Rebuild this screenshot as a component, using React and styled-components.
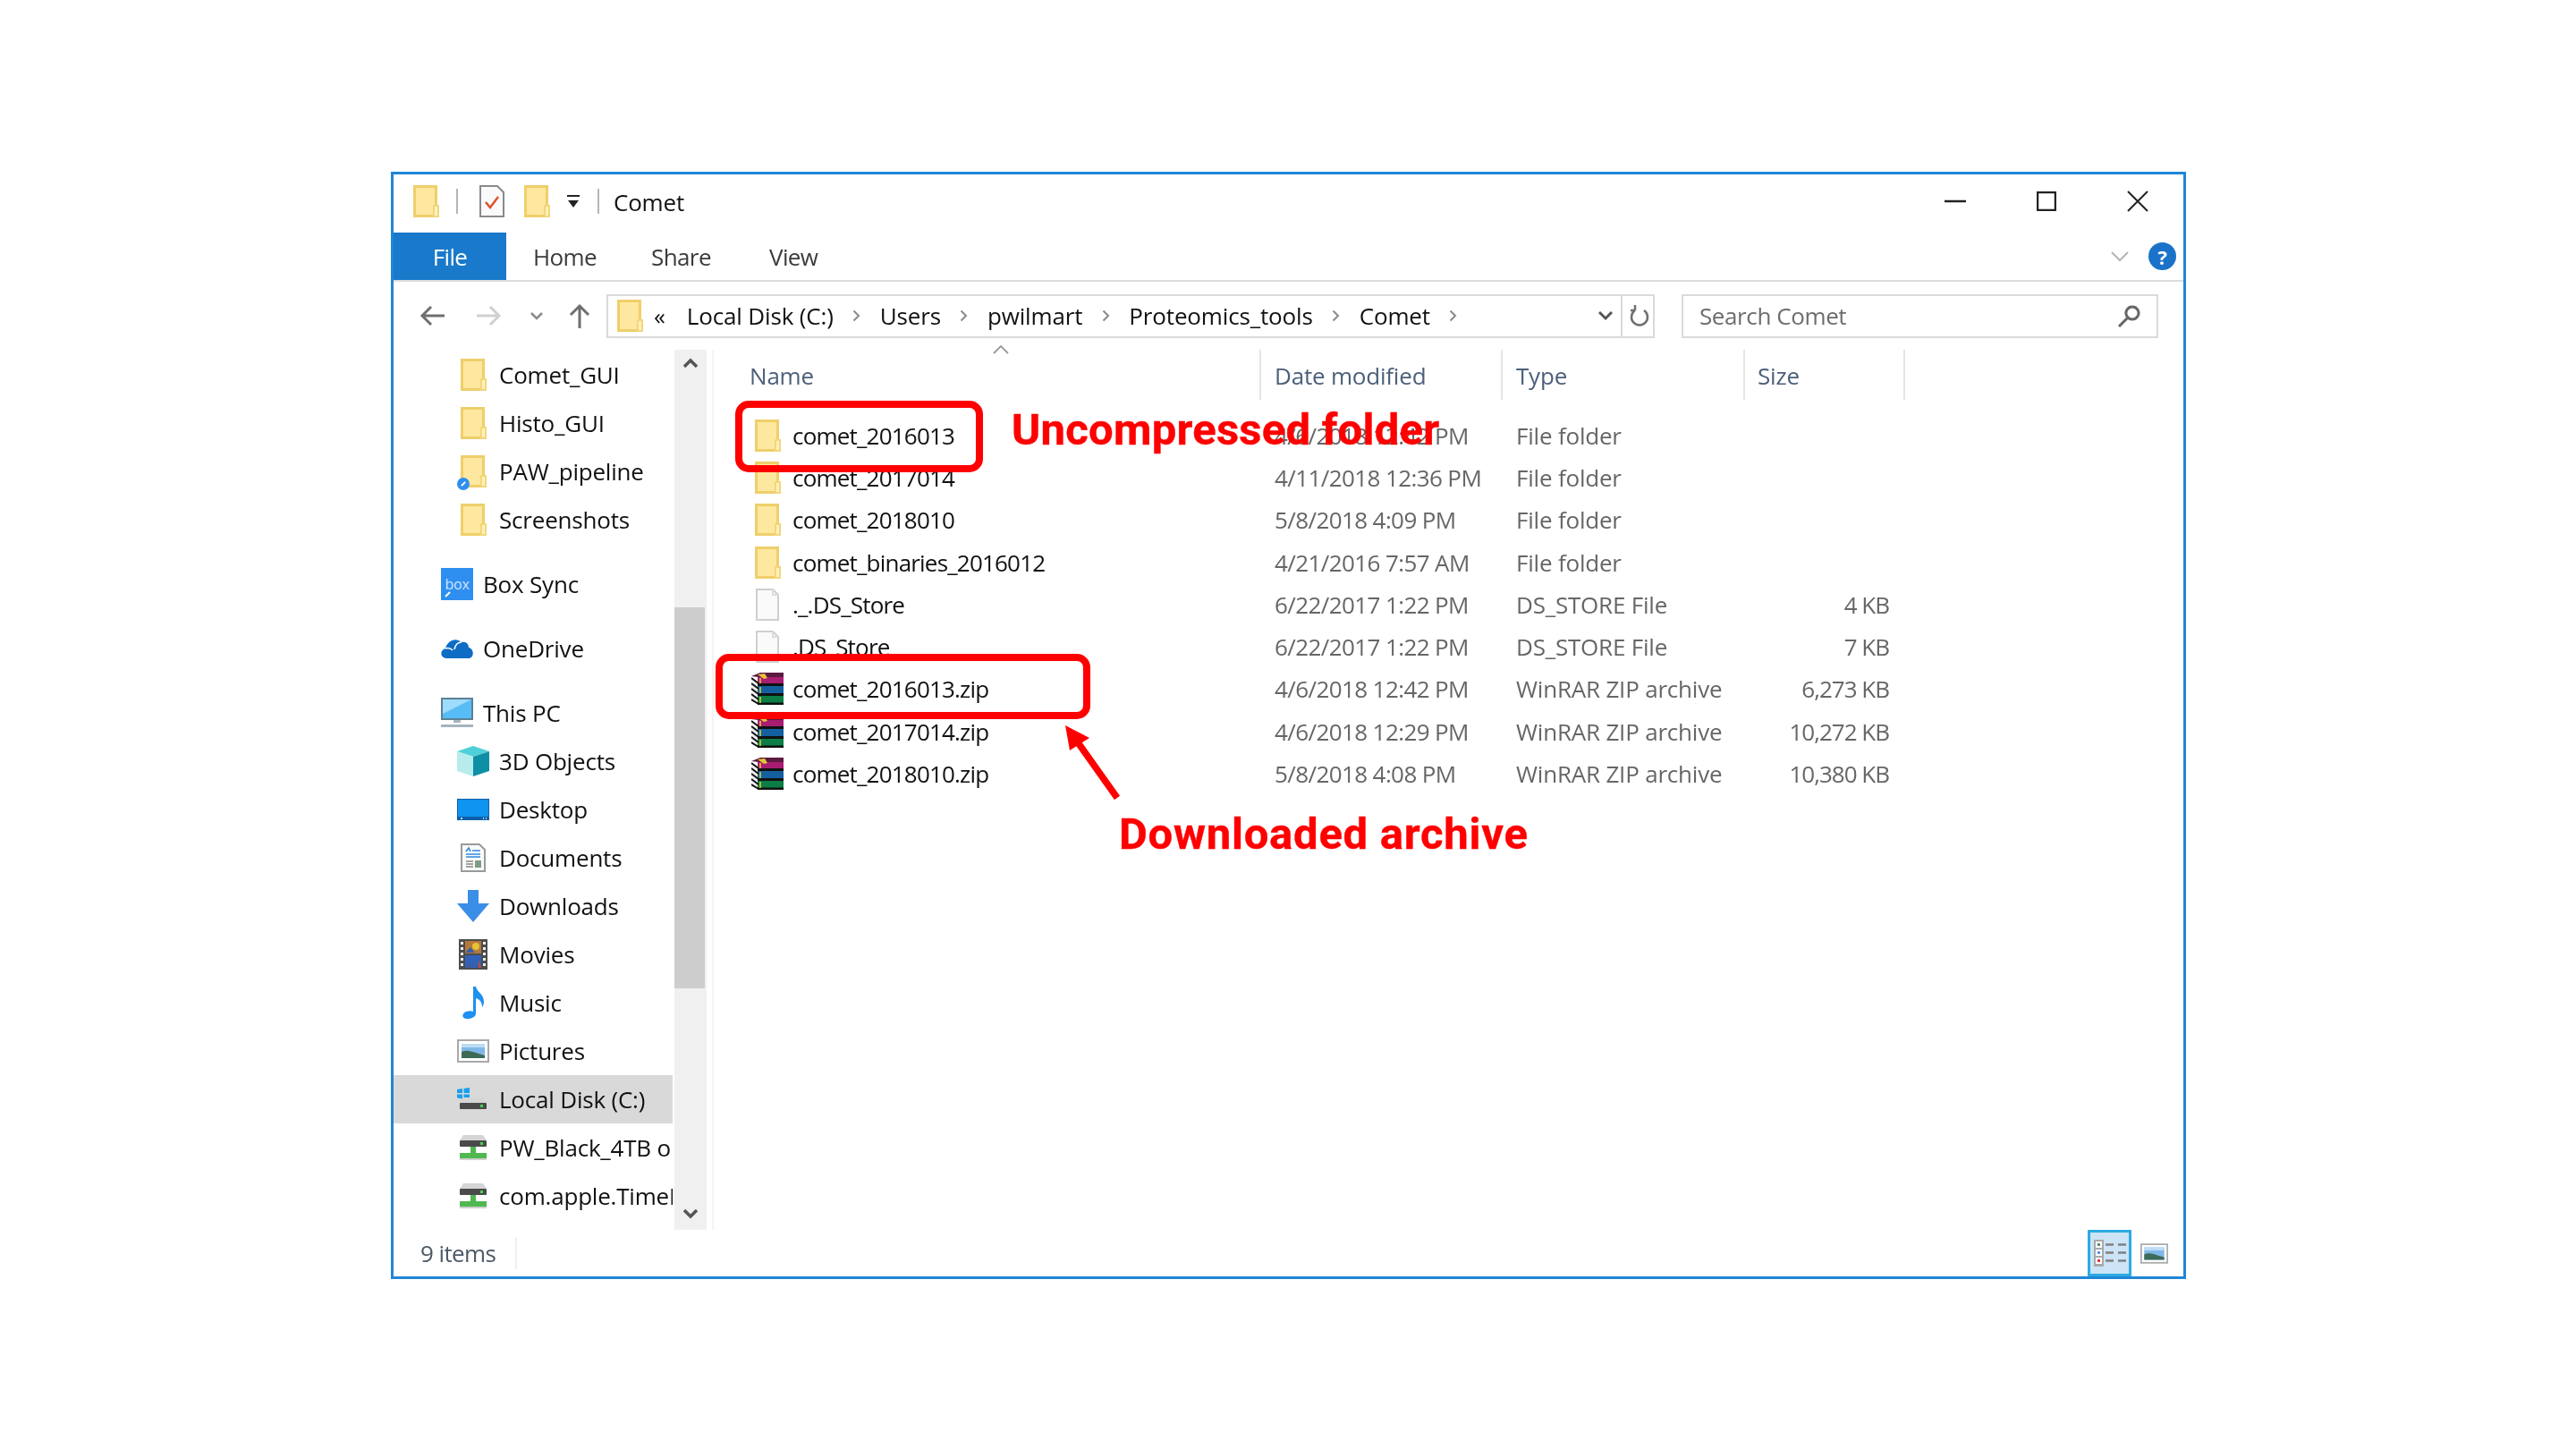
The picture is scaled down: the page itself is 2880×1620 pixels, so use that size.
import React from 'react';
import styled, { createGlobalStyle } from 'styled-components';

const Global = createGlobalStyle`
  html, body { margin: 0; padding: 0; background: #fff; }
  body { font-family: "Open Sans", "Noto Sans", sans-serif; }
`;

const Page = styled.div`
  width: 2880px;
  height: 1620px;
  box-sizing: border-box;
  padding: 192px 0 0 437px;
  overflow: hidden;
`;

const Stage = styled.div`
  position: relative;
  width: 2007px;
  height: 1238px;
`;

const Window = styled.div`
  width: 100%;
  height: 100%;
  box-sizing: border-box;
  border: 3px solid #1f86d8;
  display: flex;
  flex-direction: column;
  font-size: 26px;
  letter-spacing: -0.6px;
  color: #111;
  filter: blur(0.6px);
`;

const TitleBar = styled.div`
  height: 65px;
  box-sizing: border-box;
  padding-bottom: 5px;
  display: flex;
  align-items: center;
  flex: none;
`;

const Quick = styled.span`
  display: flex;
  align-items: center;
  margin-left: ${p => p.$left}px;
`;

const QuickSep = styled.span`
  width: 2px;
  height: 28px;
  background: #b5b5b5;
  margin-left: ${p => p.$left}px;
`;

const WindowTitle = styled.span`
  margin-left: 16px;
  padding-top: 2px;
  letter-spacing: -0.2px;
`;

const WinControls = styled.div`
  margin-left: auto;
  display: flex;
`;

const WinButton = styled.span`
  width: 102px;
  display: flex;
  justify-content: center;
  align-items: center;
`;

const RibbonTabs = styled.div`
  height: 53px;
  flex: none;
  display: flex;
  align-items: stretch;
  border-bottom: 2px solid #dcdcdc;
`;

const FileTab = styled.div`
  width: 126px;
  background: #1979ca;
  color: #fff;
  display: flex;
  align-items: center;
  justify-content: center;
`;

const TabGroup = styled.div`
  display: flex;
  padding-left: 30px;
`;

const Tab = styled.div`
  width: 132px;
  display: flex;
  align-items: center;
  color: #3b3b3b;
`;

const RibbonEnd = styled.div`
  margin-left: auto;
  display: flex;
  align-items: center;
  gap: 22px;
  padding-right: 8px;
`;

const HelpBadge = styled.span`
  width: 31px;
  height: 31px;
  border-radius: 50%;
  background: #1a73c9;
  color: #fff;
  font-weight: 700;
  font-size: 22px;
  display: flex;
  align-items: center;
  justify-content: center;
`;

const AddressRow = styled.div`
  height: 76px;
  flex: none;
  display: flex;
  align-items: center;
`;

const NavSlot = styled.span`
  width: ${p => p.$w}px;
  display: flex;
  justify-content: center;
  align-items: center;
`;

const AddressBar = styled.div`
  margin-left: 14px;
  width: 1172px;
  height: 49px;
  box-sizing: border-box;
  border: 2px solid #dadada;
  display: flex;
  align-items: center;
  padding-left: 10px;
  letter-spacing: -0.15px;
`;

const Crumb = styled.span`
  margin-left: ${p => p.$left || 0}px;
`;

const CrumbSep = styled.span`
  display: flex;
  margin: 0 21.5px;
`;

const AddressEnd = styled.div`
  margin-left: auto;
  height: 100%;
  display: flex;
  align-items: center;
`;

const RefreshSlot = styled.span`
  width: 36px;
  height: 100%;
  box-sizing: border-box;
  padding-left: 4px;
  border-left: 2px solid #dadada;
  margin-left: 9px;
  display: flex;
  justify-content: center;
  align-items: center;
`;

const SearchBox = styled.div`
  margin-left: 30px;
  width: 533px;
  height: 49px;
  box-sizing: border-box;
  border: 2px solid #dadada;
  display: flex;
  align-items: center;
  justify-content: space-between;
  padding: 0 18px;
  color: #6d6d6d;
  letter-spacing: -0.4px;
`;

const Main = styled.div`
  flex: 1;
  min-height: 0;
  display: flex;
`;

const Tree = styled.div`
  width: 312px;
  flex: none;
  padding-top: 1px;
  overflow: hidden;
  letter-spacing: -0.2px;
`;

const TreeRow = styled.div`
  height: 54px;
  display: flex;
  align-items: center;
  gap: 11px;
  white-space: nowrap;
  padding-left: ${p => (p.$level === 1 ? 53 : 71)}px;
  margin-top: ${p => (p.$group ? 18 : 0)}px;
  background: ${p => (p.$selected ? '#d9d9d9' : 'transparent')};
`;

const IconSlot = styled.span`
  width: 36px;
  height: 36px;
  flex: none;
  position: relative;
  display: flex;
  justify-content: center;
  align-items: center;
`;

const Scrollbar = styled.div`
  width: 36px;
  flex: none;
  margin-left: 2px;
  background: #f0f0f0;
  display: flex;
  flex-direction: column;
`;

const ScrollCap = styled.div`
  height: ${p => (p.$h ? `${p.$h}px` : 'auto')};
  flex: ${p => (p.$h ? 'none' : 1)};
  display: flex;
  justify-content: center;
  align-items: ${p => (p.$h ? 'flex-start' : 'flex-end')};
  padding: ${p => (p.$h ? '9px 0 0' : '0 0 12px')};
  box-sizing: border-box;
`;

const ScrollThumb = styled.div`
  width: 34px;
  height: 426px;
  background: #cdcdcd;
`;

const FilePane = styled.div`
  flex: 1;
  margin-left: 6px;
  border-left: 2px solid #f4f4f4;
  position: relative;
`;

const HeaderRow = styled.div`
  height: 56px;
  display: grid;
  grid-template-columns: 612px 270px 271px 179px;
  color: #4c607a;
  letter-spacing: -0.2px;
`;

const HeaderCell = styled.div`
  display: flex;
  align-items: center;
  padding-left: ${p => p.$left}px;
  padding-top: 2px;
  border-right: 2px solid #e5e5e5;
`;

const SortCaret = styled.span`
  position: absolute;
  left: 312px;
  top: -5px;
  display: flex;
`;

const FileRows = styled.div`
  padding-top: 16px;
`;

const FileRow = styled.div`
  height: 47.3px;
  display: grid;
  grid-template-columns: 612px 270px 271px 179px;
  align-items: center;
  color: #666;
`;

const NameCell = styled.div`
  display: flex;
  align-items: center;
  gap: 10px;
  padding-left: 42px;
  color: #111;
  white-space: nowrap;
  letter-spacing: -0.8px;
`;

const Cell = styled.div`
  padding-left: 15px;
  white-space: nowrap;
`;

const TypeCell = styled(Cell)`
  letter-spacing: -0.2px;
`;

const SizeCell = styled.div`
  text-align: right;
  padding-right: 18px;
  letter-spacing: -1px;
`;

const StatusBar = styled.div`
  height: 52px;
  flex: none;
  display: flex;
  align-items: center;
  color: #4d5a68;
`;

const ItemCount = styled.span`
  margin-left: 30px;
  padding-right: 22px;
  border-right: 2px solid #f0f0f0;
`;

const DetailsButton = styled.span`
  margin-left: auto;
  width: 49px;
  height: 52px;
  flex: none;
  box-sizing: border-box;
  border: 3px solid #2eaae0;
  background: #cce4f5;
  display: flex;
  justify-content: center;
  align-items: center;
`;

const PreviewButton = styled.span`
  margin: 0 17px 0 10px;
  display: flex;
`;

const Callout = styled.div`
  position: absolute;
  left: ${p => p.$x}px;
  top: ${p => p.$y}px;
  width: ${p => p.$w}px;
  height: ${p => p.$h}px;
  box-sizing: border-box;
  border: 8px solid #ff0000;
  border-radius: 15px;
`;

const CalloutLabel = styled.div`
  position: absolute;
  left: ${p => p.$x}px;
  top: ${p => p.$y}px;
  line-height: 60px;
  font-family: "Roboto", "Liberation Sans", sans-serif;
  font-weight: 700;
  font-size: 49px;
  letter-spacing: ${p => p.$spacing}px;
  -webkit-text-stroke: 0.4px #ff0000;
  color: #ff0000;
  white-space: nowrap;
`;

const ArrowMark = styled.svg`
  position: absolute;
  left: 744px;
  top: 612px;
`;

const LinkBadge = styled.span`
  position: absolute;
  left: 0;
  bottom: -3px;
  width: 14px;
  height: 14px;
  border-radius: 50%;
  background: #2f8ff0;
  display: flex;
  justify-content: center;
  align-items: center;
  &::after {
    content: '';
    width: 6px;
    height: 2px;
    background: #fff;
    transform: rotate(-45deg);
  }
`;

const Folder = () => (
  <svg width="29" height="36" viewBox="0 0 29 36">
    <rect x="0" y="0" width="27" height="36" fill="#efcf6a" />
    <rect x="3" y="3" width="21" height="30" fill="#fee89f" />
    <rect x="22" y="22" width="7" height="14" fill="#f3d67b" />
    <rect x="24" y="24" width="3" height="10" fill="#fff0bd" />
  </svg>
);

const BlankFile = () => (
  <svg width="26" height="36" viewBox="0 0 26 36">
    <path d="M1 1h18l6 6v28H1z" fill="#fafafa" stroke="#cfcfcf" strokeWidth="2" />
    <path d="M19 1v6h6" fill="none" stroke="#dcdcdc" strokeWidth="2" />
  </svg>
);

const ZipIcon = () => (
  <svg width="36" height="36" viewBox="0 0 36 36">
    <path d="M0 6l8 5v25l-8-4z" fill="#efefef" />
    <path d="M0 4l10-4h26v5H8z" fill="#5c1a3f" />
    <rect x="7" y="5" width="29" height="8" fill="#a81c72" />
    <rect x="7" y="15" width="29" height="9" fill="#14609f" />
    <rect x="7" y="26" width="29" height="9" fill="#0b7d45" />
    <path d="M0 6l8 6M0 12l8 6M0 18l8 6M0 24l8 6M0 30l8 5" stroke="#111" strokeWidth="2" />
    <path d="M7 13.500h29M7 24.500h29M7 35h29" stroke="#111" strokeWidth="3" />
    <path d="M10 6v6M10 16v7M10 27v7" stroke="#e5d030" strokeWidth="1.500" />
    <path d="M7 2l8-1 3 5-4 1z" fill="#e3c43a" />
  </svg>
);

const BoxIcon = () => (
  <svg width="36" height="36" viewBox="0 0 36 36">
    <rect width="36" height="36" fill="#2f8ff0" />
    <text x="18" y="24" textAnchor="middle" fontSize="16" fill="#cfe6ff" fontFamily="Open Sans">box</text>
    <path d="M5 32l5-5" stroke="#fff" strokeWidth="2" />
  </svg>
);

const CloudIcon = () => (
  <svg width="36" height="24" viewBox="0 0 36 24">
    <path d="M7 23c-8 0-9-9-2-11 2-8 11-13 18-7 5-1 8 2 8 6 6 1 7 12-1 12z" fill="#0f6cc4" />
    <path d="M5 12c3-1 6 0 8 2M23 5c-4 0-7 3-8 8" fill="none" stroke="#fff" strokeWidth="1.6" />
  </svg>
);

const MonitorIcon = () => (
  <svg width="36" height="34" viewBox="0 0 36 34">
    <rect width="36" height="25" fill="#5c7f95" />
    <rect x="2" y="2" width="32" height="21" fill="#58bdf6" />
    <path d="M2 2h32L2 18z" fill="#9ddcfb" />
    <rect x="14" y="25" width="8" height="3" fill="#a7b4bd" />
    <rect y="30" width="36" height="3" fill="#a7b4bd" />
  </svg>
);

const CubeIcon = () => (
  <svg width="36" height="34" viewBox="0 0 36 34">
    <path d="M18 0l18 6-18 6L0 6z" fill="#4fd0d8" />
    <path d="M0 6l18 6v22L0 28z" fill="#b6ecec" />
    <path d="M36 6L18 12v22l18-6z" fill="#0f8fa6" />
  </svg>
);

const DesktopIcon = () => (
  <svg width="36" height="24" viewBox="0 0 36 24">
    <rect width="36" height="24" fill="#0b5fa8" />
    <rect x="1" y="1" width="34" height="19" fill="#0f94f2" />
    <path d="M4 22h2M29 22h1M32 22h1" stroke="#fff" strokeWidth="1.5" />
  </svg>
);

const DocsIcon = () => (
  <svg width="28" height="32" viewBox="0 0 28 32">
    <path d="M1 1h20l6 6v24H1z" fill="#fafafa" stroke="#9a9a9a" strokeWidth="2" />
    <path d="M6 9l3-4 2 4M13 8h9M6 12h16M6 15h16" stroke="#2e8be0" strokeWidth="1.6" fill="none" />
    <path d="M6 20h8M6 23h8M6 26h8" stroke="#888" strokeWidth="1.4" />
    <rect x="16" y="19" width="7" height="8" fill="#7e9c86" />
  </svg>
);

const DownloadIcon = () => (
  <svg width="36" height="36" viewBox="0 0 36 36">
    <path d="M12 0h12v15h12L18 36 0 15h12z" fill="#3a8ee6" />
  </svg>
);

const MovieIcon = () => (
  <svg width="32" height="34" viewBox="0 0 32 34">
    <rect width="32" height="34" fill="#4c4c4c" />
    <rect x="7" y="2" width="18" height="14" fill="#b5793b" />
    <rect x="7" y="18" width="18" height="14" fill="#2f62b8" />
    <circle cx="19" cy="8" r="4" fill="#e8c233" />
    <path d="M7 15l6-6 5 6zM18 32l-5-7-6 7z" fill="#3b5ea8" />
    <path d="M22 32v-9l3 9z" fill="#c94a2a" />
    <path d="M3.500 3v28M28.500 3v28" stroke="#eee" strokeWidth="3" strokeDasharray="3 3" />
  </svg>
);

const MusicIcon = () => (
  <svg width="26" height="36" viewBox="0 0 26 36">
    <path d="M13 0h3c1 6 9 8 9 17 0 3-1 5-2 6 0-6-3-9-7-10v17c0 4-5 6-10 6-6 0-6-6-1-8 3-1 6-1 8 0z" fill="#1e90f0" />
  </svg>
);

const PictureIcon = ({ w = 36, h = 26 }) => (
  <svg width={w} height={h} viewBox="0 0 36 26">
    <rect width="36" height="26" fill="#a9a9a9" />
    <rect x="2" y="2" width="32" height="22" fill="#fff" />
    <rect x="5" y="5" width="26" height="16" fill="#7fb8e8" />
    <path d="M5 14c7-3 12 0 26 4v3H5z" fill="#3d6b58" />
    <path d="M5 5h26v4H5z" fill="#bcdcf5" />
  </svg>
);

const Drive = ({ y }) => (
  <g transform={`translate(3 ${y})`}>
    <path d="M4 0h22l4 6H0z" fill="#d5d5d5" />
    <rect y="6" width="30" height="7" rx="1" fill="#4a4a4a" />
    <rect x="23" y="8" width="3" height="3" fill="#44d850" />
  </g>
);

const LocalDiskIcon = () => (
  <svg width="36" height="28" viewBox="0 0 36 28">
    <path d="M0 3l6-1v5H0zM7.500 2L14 1v6H7.500zM0 8.500h6v5l-6-1zM7.500 8.500H14v6l-6.500-1z" fill="#19a1ee" />
    <Drive y={12} />
  </svg>
);

const NetDriveIcon = () => (
  <svg width="36" height="28" viewBox="0 0 36 28">
    <Drive y={0} />
    <rect x="15" y="13" width="6" height="7" fill="#4fb84f" />
    <rect x="3" y="20" width="30" height="7" fill="#4fb84f" />
    <rect x="3" y="26" width="30" height="2" fill="#cfcfcf" />
  </svg>
);

const Line = ({ w, h, d, color = '#6f6f6f', sw = 2.5 }) => (
  <svg width={w} height={h} viewBox={`0 0 ${w} ${h}`}>
    <path d={d} fill="none" stroke={color} strokeWidth={sw} />
  </svg>
);

const PawFolder = () => (
  <IconSlot>
    <Folder />
    <LinkBadge />
  </IconSlot>
);

const Chevron = () => <Line w={9} h={14} d="M1.500 1.500L7 7l-5.500 5.500" color="#8a8a8a" sw={2} />;

const treeItems = [
  { label: 'Comet_GUI', icon: <Folder /> },
  { label: 'Histo_GUI', icon: <Folder /> },
  { label: 'PAW_pipeline', custom: <PawFolder /> },
  { label: 'Screenshots', icon: <Folder /> },
  { label: 'Box Sync', icon: <BoxIcon />, level: 1, group: true },
  { label: 'OneDrive', icon: <CloudIcon />, level: 1, group: true },
  { label: 'This PC', icon: <MonitorIcon />, level: 1, group: true },
  { label: '3D Objects', icon: <CubeIcon /> },
  { label: 'Desktop', icon: <DesktopIcon /> },
  { label: 'Documents', icon: <DocsIcon /> },
  { label: 'Downloads', icon: <DownloadIcon /> },
  { label: 'Movies', icon: <MovieIcon /> },
  { label: 'Music', icon: <MusicIcon /> },
  { label: 'Pictures', icon: <PictureIcon /> },
  { label: 'Local Disk (C:)', icon: <LocalDiskIcon />, selected: true },
  { label: 'PW_Black_4TB on Mac', icon: <NetDriveIcon /> },
  { label: 'com.apple.TimeMachine', icon: <NetDriveIcon /> },
];

const files = [
  { name: 'comet_2016013', icon: <Folder />, date: '4/6/2018 12:42 PM', type: 'File folder' },
  { name: 'comet_2017014', icon: <Folder />, date: '4/11/2018 12:36 PM', type: 'File folder' },
  { name: 'comet_2018010', icon: <Folder />, date: '5/8/2018 4:09 PM', type: 'File folder' },
  { name: 'comet_binaries_2016012', icon: <Folder />, date: '4/21/2016 7:57 AM', type: 'File folder' },
  { name: '._.DS_Store', icon: <BlankFile />, date: '6/22/2017 1:22 PM', type: 'DS_STORE File', size: '4 KB' },
  { name: '.DS_Store', icon: <BlankFile />, date: '6/22/2017 1:22 PM', type: 'DS_STORE File', size: '7 KB' },
  { name: 'comet_2016013.zip', icon: <ZipIcon />, date: '4/6/2018 12:42 PM', type: 'WinRAR ZIP archive', size: '6,273 KB' },
  { name: 'comet_2017014.zip', icon: <ZipIcon />, date: '4/6/2018 12:29 PM', type: 'WinRAR ZIP archive', size: '10,272 KB' },
  { name: 'comet_2018010.zip', icon: <ZipIcon />, date: '5/8/2018 4:08 PM', type: 'WinRAR ZIP archive', size: '10,380 KB' },
];

const crumbs = ['Local Disk (C:)', 'Users', 'pwilmart', 'Proteomics_tools', 'Comet'];

const App = () => (
  <Page>
    <Global />
    <Stage>
      <Window>
        <TitleBar>
          <Quick $left={22}><Folder /></Quick>
          <QuickSep $left={19} />
          <Quick $left={24}>
            <svg width="28" height="36" viewBox="0 0 28 36">
              <path d="M1 1h19l7 7v27H1z" fill="#fafafa" stroke="#8a8a8a" strokeWidth="2" />
              <path d="M7 19l5 6 9-12" fill="none" stroke="#e2502a" strokeWidth="2.500" />
            </svg>
          </Quick>
          <Quick $left={22}><Folder /></Quick>
          <Quick $left={18}>
            <svg width="16" height="16" viewBox="0 0 16 16">
              <path d="M1 2h14" stroke="#222" strokeWidth="2" />
              <path d="M2 7h12l-6 8z" fill="#222" />
            </svg>
          </Quick>
          <QuickSep $left={19} />
          <WindowTitle>Comet</WindowTitle>
          <WinControls>
            <WinButton><Line w={24} h={4} d="M0 2h24" color="#222" /></WinButton>
            <WinButton><Line w={22} h={22} d="M1 1h20v20H1z" color="#222" /></WinButton>
            <WinButton><Line w={24} h={24} d="M1 1l22 22M23 1L1 23" color="#222" sw={2} /></WinButton>
          </WinControls>
        </TitleBar>
        <RibbonTabs>
          <FileTab>File</FileTab>
          <TabGroup>
            <Tab>Home</Tab>
            <Tab>Share</Tab>
            <Tab>View</Tab>
          </TabGroup>
          <RibbonEnd>
            <Line w={20} h={12} d="M1 1l9 9 9-9" color="#b5b5b5" sw={2} />
            <HelpBadge>?</HelpBadge>
          </RibbonEnd>
        </RibbonTabs>
        <AddressRow>
          <NavSlot $w={86}>
            <Line w={28} h={24} d="M28 12H3M13 2L3 12l10 10" sw={3} />
          </NavSlot>
          <NavSlot $w={42}>
            <Line w={28} h={24} d="M0 12h25M15 2l10 10-10 10" color="#d0d0d0" sw={3} />
          </NavSlot>
          <NavSlot $w={64}>
            <Line w={14} h={9} d="M1 1l6 6 6-6" color="#8a8a8a" sw={2.5} />
          </NavSlot>
          <NavSlot $w={32}>
            <Line w={24} h={28} d="M12 28V3M2 13L12 3l10 10" sw={3} />
          </NavSlot>
          <AddressBar>
            <Folder />
            <Crumb $left={12}>«</Crumb>
            <Crumb $left={24}>{crumbs[0]}</Crumb>
            <CrumbSep><Chevron /></CrumbSep>
            {crumbs.slice(1).map(c => (
              <React.Fragment key={c}>
                <Crumb>{c}</Crumb>
                <CrumbSep><Chevron /></CrumbSep>
              </React.Fragment>
            ))}
            <AddressEnd>
              <Line w={16} h={11} d="M1 1l7 7 7-7" color="#555" sw={3} />
              <RefreshSlot>
                <Line w={22} h={26} d="M16 7a9 9 0 1 1-10 0M6 7V1M6 7H1" color="#6f6f6f" sw={2.5} />
              </RefreshSlot>
            </AddressEnd>
          </AddressBar>
          <SearchBox>
            <span>Search Comet</span>
            <Line w={26} h={26} d="M17 3a7 7 0 1 1-.1 0M11 16l-9 9" color="#666" sw={3} />
          </SearchBox>
        </AddressRow>
        <Main>
          <Tree>
            {treeItems.map(item => (
              <TreeRow key={item.label} $level={item.level} $group={item.group} $selected={item.selected}>
                {item.custom || <IconSlot>{item.icon}</IconSlot>}
                {item.label}
              </TreeRow>
            ))}
          </Tree>
          <Scrollbar>
            <ScrollCap $h={288}>
              <Line w={16} h={11} d="M1 10l7-7 7 7" color="#555" sw={3.5} />
            </ScrollCap>
            <ScrollThumb />
            <ScrollCap>
              <Line w={16} h={11} d="M1 1l7 7 7-7" color="#555" sw={3.5} />
            </ScrollCap>
          </Scrollbar>
          <FilePane>
            <SortCaret>
              <Line w={18} h={10} d="M1 9l8-8 8 8" color="#9a9a9a" sw={1.8} />
            </SortCaret>
            <HeaderRow>
              <HeaderCell $left={40}>Name</HeaderCell>
              <HeaderCell $left={15}>Date modified</HeaderCell>
              <HeaderCell $left={15}>Type</HeaderCell>
              <HeaderCell $left={14}>Size</HeaderCell>
            </HeaderRow>
            <FileRows>
              {files.map(f => (
                <FileRow key={f.name}>
                  <NameCell>
                    <IconSlot>{f.icon}</IconSlot>
                    {f.name}
                  </NameCell>
                  <Cell>{f.date}</Cell>
                  <TypeCell>{f.type}</TypeCell>
                  <SizeCell>{f.size}</SizeCell>
                </FileRow>
              ))}
            </FileRows>
          </FilePane>
        </Main>
        <StatusBar>
          <ItemCount>9 items</ItemCount>
          <DetailsButton>
            <svg width="36" height="30" viewBox="0 0 36 30">
              <rect width="11" height="30" fill="#a9a9a9" />
              <rect x="2" y="2" width="7" height="7" fill="#fff" />
              <rect x="2" y="11" width="7" height="7" fill="#fff" />
              <rect x="2" y="20" width="7" height="7" fill="#fff" />
              <rect x="4" y="4" width="3" height="3" fill="#5b8a6c" />
              <rect x="4" y="13" width="3" height="3" fill="#5c94f0" />
              <rect x="4" y="22" width="3" height="3" fill="#e23a3a" />
              <path d="M13 5.500h9M27 5.500h9M13 14.500h9M27 14.500h9M13 23.500h9M27 23.500h9" stroke="#808080" strokeWidth="2.500" />
            </svg>
          </DetailsButton>
          <PreviewButton><PictureIcon w={31} h={25} /></PreviewButton>
        </StatusBar>
      </Window>
      <Callout $x={385} $y={256} $w={277} $h={80} />
      <Callout $x={363} $y={539} $w={419} $h={73} />
      <CalloutLabel $x={694} $y={259} $spacing={0.25}>Uncompressed folder</CalloutLabel>
      <CalloutLabel $x={814} $y={711} $spacing={0.75}>Downloaded archive</CalloutLabel>
      <ArrowMark width="80" height="96" viewBox="0 0 80 96">
        <path d="M10 7l5 28 22-14z" fill="#ff0000" />
        <path d="M24 26l44 62" stroke="#ff0000" strokeWidth="7.500" fill="none" />
      </ArrowMark>
    </Stage>
  </Page>
);

export default App;
